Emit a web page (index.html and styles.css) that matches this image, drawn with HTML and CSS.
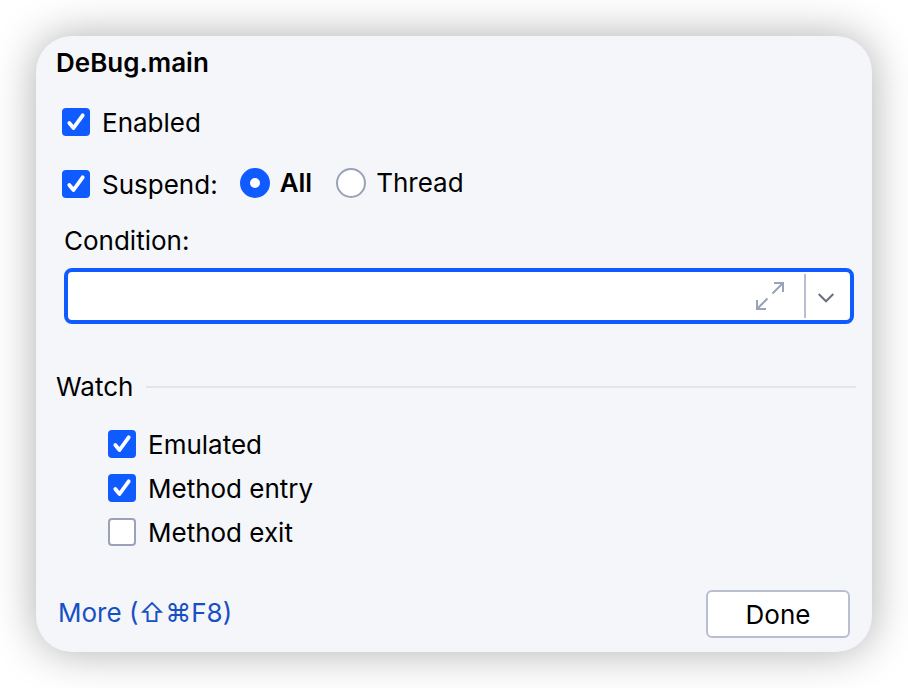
FILE: index.html
```
<!DOCTYPE html>
<html lang="en">
<head>
<meta charset="utf-8">
<title>Breakpoint: DeBug.main</title>
<link rel="stylesheet" href="styles.css">
</head>
<body>
<form class="popup">
  <h1 class="title">DeBug.main</h1>
  <div class="options">
    <label class="choice"><input class="check" type="checkbox" checked>Enabled</label>
    <div class="suspend">
      <label class="choice"><input class="check" type="checkbox" checked>Suspend:</label>
      <div class="policy">
        <label class="choice choice-radio choice-strong"><input class="radio" type="radio" name="policy" checked>All</label>
        <label class="choice choice-radio"><input class="radio" type="radio" name="policy">Thread</label>
      </div>
    </div>
  </div>
  <div class="condition">
    <label for="condition">Condition:</label>
    <div class="combo">
      <input class="combo-input" id="condition" type="text">
      <button class="combo-expand" type="button" aria-label="Expand">
        <svg width="28" height="28" viewBox="0 0 28 28" fill="none" stroke="currentColor" stroke-width="2"><path d="M16.500 11.500L27 1M18 1H27V10M11.500 16.500L1 27M1 18V27H10"/></svg>
      </button>
      <button class="combo-toggle" type="button" aria-label="History">
        <svg width="16" height="10" viewBox="0 0 16 10" fill="none" stroke="currentColor" stroke-width="2"><path d="M.7 1L8 8.300L15.300 1"/></svg>
      </button>
    </div>
  </div>
  <fieldset class="watch">
    <legend class="watch-title">Watch</legend>
    <div class="watch-list">
      <label class="choice"><input class="check" type="checkbox" checked>Emulated</label>
      <label class="choice"><input class="check" type="checkbox" checked>Method entry</label>
      <label class="choice"><input class="check" type="checkbox">Method exit</label>
    </div>
  </fieldset>
  <footer class="footer">
    <a class="more" href="#">More (⇧⌘F8)</a>
    <button class="done" type="button">Done</button>
  </footer>
</form>
</body>
</html>
```
FILE: styles.css
```
* {
  box-sizing: border-box;
}

body {
  margin: 0;
  padding: 36px;
  background: #fff;
  color: #000;
  font: 26px/32px Inter, "DejaVu Sans", sans-serif;
}

input,
button {
  margin: 0;
  padding: 0;
  font: inherit;
  color: inherit;
}

.popup {
  padding: 11px 16px 14px 20px;
  border-radius: 36px;
  background: #f4f6fa;
  box-shadow: 0 0 44px rgba(0, 0, 0, 0.32);
}

.title {
  margin: 0;
  font-size: 26px;
  font-weight: 600;
}

.options {
  display: flex;
  flex-direction: column;
  align-items: flex-start;
  gap: 28px;
  padding: 28px 6px 0;
}

.choice {
  display: flex;
  align-items: center;
  gap: 12px;
}

.choice-radio {
  gap: 10px;
}

.choice-strong {
  font-weight: 600;
}

.suspend {
  display: flex;
  align-items: flex-end;
  gap: 22px;
}

.policy {
  display: flex;
  gap: 24px;
  padding-bottom: 2px;
}

.check,
.radio {
  appearance: none;
  flex: none;
  width: 28px;
  height: 28px;
  border: 2px solid #9aa1b9;
  border-radius: 4px;
  background: #fff;
}

.check {
  margin-bottom: 2px;
}

.check:checked {
  border: 0;
  background: #0f5bff url('data:image/svg+xml,<svg xmlns="http://www.w3.org/2000/svg" viewBox="0 0 28 28"><path d="M7.300 15L11.500 20L20.700 7.300" fill="none" stroke="white" stroke-width="3.800" stroke-linecap="round" stroke-linejoin="round"/></svg>');
}

.radio {
  width: 30px;
  height: 30px;
  border-radius: 50%;
}

.radio:checked {
  border: 10px solid #0f5bff;
}

.condition {
  display: flex;
  flex-direction: column;
  gap: 11px;
  padding: 24px 2px 0 8px;
}

.combo {
  display: flex;
  align-items: center;
  height: 56px;
  border: 4px solid #0f5bff;
  border-radius: 8px;
  background: #fff;
}

.combo-input {
  flex: 1;
  min-width: 0;
  height: 100%;
  padding: 0 8px;
  border: 0;
  background: none;
  outline: none;
}

.combo-expand,
.combo-toggle {
  display: flex;
  align-items: center;
  justify-content: center;
  height: 44px;
  border: 0;
  background: none;
}

.combo-expand {
  width: 68px;
  color: #9aa1b9;
}

.combo-toggle {
  width: 46px;
  padding: 4px 4px 0 0;
  border-left: 2px solid #b9bed0;
  color: #696f84;
}

.watch {
  margin: 0;
  padding: 47px 0 0;
  border: 0;
}

.watch-title {
  display: flex;
  align-items: center;
  gap: 13px;
  float: left;
  width: 100%;
  padding: 0;
}

.watch-title::after {
  content: "";
  flex: 1;
  height: 2px;
  background: #e3e5ea;
}

.watch-list {
  display: flex;
  flex-direction: column;
  align-items: flex-start;
  gap: 12px;
  clear: both;
  padding: 26px 0 0 52px;
}

.footer {
  display: flex;
  align-items: center;
  justify-content: space-between;
  padding: 41px 6px 0 2px;
}

.more {
  padding-bottom: 2px;
  color: #1750c4;
  text-decoration: none;
}

.done {
  width: 144px;
  height: 48px;
  padding-top: 2px;
  border: 2px solid #b9bed0;
  border-radius: 6px;
  background: #fff;
}
```
